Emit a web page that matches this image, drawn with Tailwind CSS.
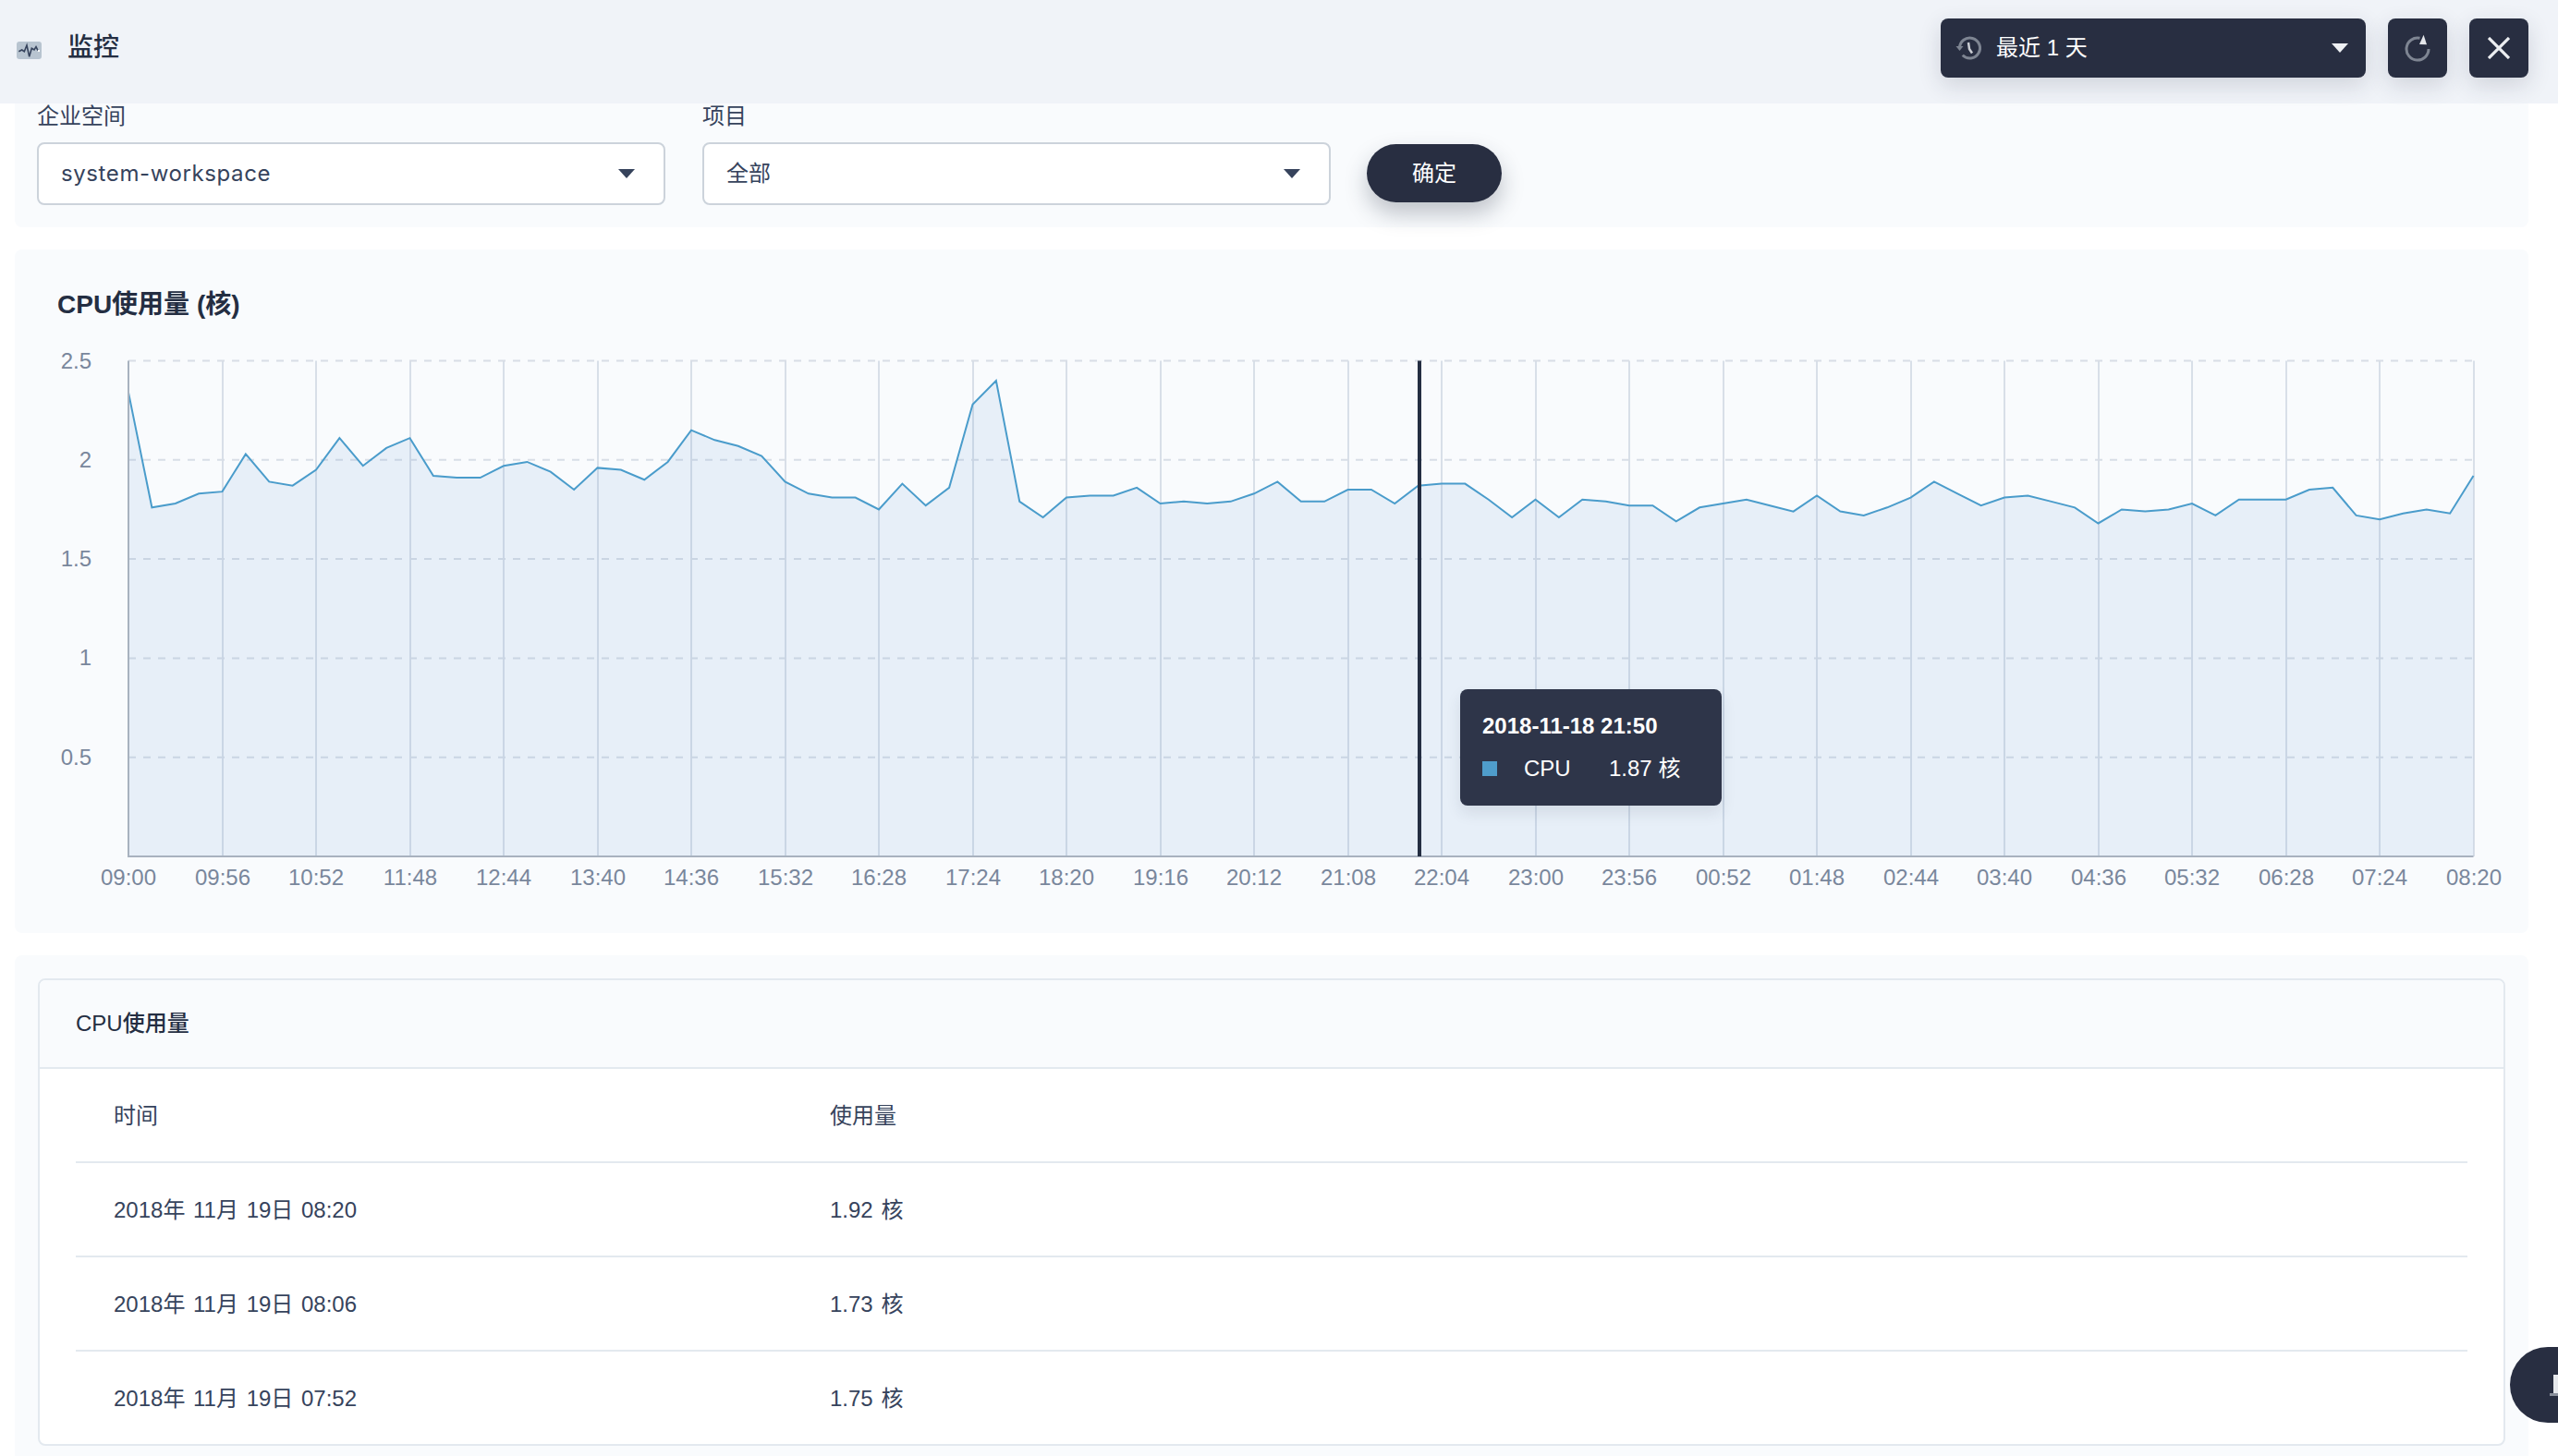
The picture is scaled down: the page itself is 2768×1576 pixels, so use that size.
<!DOCTYPE html>
<html lang="zh">

<head>
  <meta charset="UTF-8" />
  <script src="https://cdn.jsdelivr.net/npm/@tailwindcss/browser@4"></script>
  <title>监控</title>
</head>

<body class="m-0 p-0 bg-white text-[#242e42] text-[24px] [font-family:'Liberation_Sans','Noto_Sans_CJK_SC',sans-serif]">
  <div class="relative w-[2768px] h-[1576px] overflow-hidden">
    <!-- top bar -->
    <header class="relative z-10 flex items-center justify-between h-[112px] pl-[18px] pr-[32px] pb-[8px] bg-[#f0f3f8]">
      <div class="flex items-center">
        <svg width="27" height="19" viewBox="0 0 27 19" class="mr-[28px] mt-[4px]">
          <rect width="27" height="19" rx="3" fill="#b8c4d0" />
          <polyline points="2.3,10.7 5.7,9 8.3,10.7 11,4 13.7,16.3 16.3,7.3 19,9 21,5.7 23,9.7" fill="none" stroke="#36435c" stroke-width="1.6" />
          <rect x="23" y="9" width="2" height="2" fill="#fff" />
        </svg>
        <span class="text-[28px] font-medium leading-none">监控</span>
      </div>
      <div class="flex items-center gap-6">
        <div class="flex items-center w-[460px] h-[64px] pl-[16px] pr-[19px] rounded-lg bg-[#282e41] text-white shadow-[0_8px_24px_rgba(36,46,66,0.16)]">
          <svg width="28" height="26" viewBox="0 0 28 26" fill="none" stroke="#7e8592" stroke-width="3" class="mr-[16px]">
            <path d="M4.5 13a11 11 0 1 1 3.2 7.8" />
            <path d="M0.5 11h8l-4 5z" fill="#7e8592" stroke="none" />
            <path d="M14 7l1 7 3 4.5" stroke-width="2.5" stroke="#c9ccd2" />
          </svg>
          <span>最近 1 天</span>
          <svg width="18" height="10" viewBox="0 0 18 10" class="ml-auto"><path d="M0 0h18l-9 10z" fill="#eef0f3" /></svg>
        </div>
        <button class="flex items-center justify-center w-[64px] h-[64px] rounded-lg bg-[#282e41] shadow-[0_8px_24px_rgba(36,46,66,0.16)]">
          <svg width="28" height="30" viewBox="0 0 28 30" fill="none">
            <path d="M16.5 4.3A12 12 0 1 0 26 16" stroke="#7e8592" stroke-width="3" />
            <path d="M16 11L20.6 0.7 24 11.3z" fill="#e4e6ea" />
          </svg>
        </button>
        <button class="flex items-center justify-center w-[64px] h-[64px] rounded-lg bg-[#282e41] shadow-[0_8px_24px_rgba(36,46,66,0.16)]">
          <svg width="24" height="24" viewBox="0 0 24 24" fill="none" stroke="#eceef1" stroke-width="3.2">
            <path d="M1 1l22 22M23 1L1 23" />
          </svg>
        </button>
      </div>
    </header>

    <main class="flex flex-col gap-6 pl-4 pr-8">
      <!-- filters -->
      <section class="flex items-end gap-10 px-6 pb-6 rounded-b-lg bg-[#f9fbfd]">
        <div class="w-[680px]">
          <div class="h-[28px] mb-[14px] leading-[28px] text-[#36435c]">企业空间</div>
          <div class="flex items-center justify-between h-[68px] pl-[24px] pr-[31px] rounded-lg border-2 border-[#ccd3db] bg-white text-[#36435c]">
            <span class="[font-family:'Inter',sans-serif] tracking-[0.6px]">system-workspace</span>
            <svg width="18" height="10" viewBox="0 0 18 10"><path d="M0 0h18l-9 10z" fill="#36435c" /></svg>
          </div>
        </div>
        <div class="w-[680px]">
          <div class="h-[28px] mb-[14px] leading-[28px] text-[#36435c]">项目</div>
          <div class="flex items-center justify-between h-[68px] pl-[24px] pr-[31px] rounded-lg border-2 border-[#ccd3db] bg-white text-[#36435c]">
            <span>全部</span>
            <svg width="18" height="10" viewBox="0 0 18 10"><path d="M0 0h18l-9 10z" fill="#36435c" /></svg>
          </div>
        </div>
        <button class="w-[146px] h-[63px] mb-[3px] -ml-[1px] rounded-full bg-[#282e41] text-white shadow-[0_12px_24px_rgba(36,46,66,0.28)]">确定</button>
      </section>

      <!-- chart -->
      <section class="h-[740px] rounded-lg bg-[#f9fbfd]">
        <h2 class="pt-[42px] pl-[46px] h-[100px] text-[28px] leading-[36px] font-semibold">CPU使用量 (核)</h2>
        <div class="relative">
          <svg id="chart" width="2720" height="640" viewBox="0 0 2720 640" class="block"></svg>
          <div class="absolute left-[1564px] top-[376px] w-[283px] h-[126px] pt-[24px] pl-[24px] rounded-lg bg-[#2e3549] text-white shadow-[0_8px_16px_rgba(36,46,66,0.1)]">
            <div class="font-bold leading-[32px]">2018-11-18 21:50</div>
            <div class="flex items-center mt-[14px] leading-[32px]">
              <span class="w-4 h-4 bg-[#4f9dcb] mr-[29px]"></span>
              <span class="w-[92px]">CPU</span>
              <span>1.87 核</span>
            </div>
          </div>
        </div>
      </section>

      <!-- table -->
      <section class="h-[542px] pt-[25px] px-[25px] bg-[#f9fbfd] rounded-t-lg">
        <div class="h-[506px] rounded-lg border-2 border-[#e3e9ef] bg-white overflow-hidden">
          <div class="h-[96px] pl-[39px] leading-[94px] font-medium bg-[#f9fbfd] border-b-2 border-[#e3e9ef]">CPU使用量</div>
          <div class="mx-[39px] text-[#36435c] [word-spacing:2px]">
            <div class="flex items-center h-[102px] pl-[41px] pt-[2px] border-b-2 border-[#e3e9ef]">
              <span class="w-[775px]">时间</span><span>使用量</span>
            </div>
            <div class="flex items-center h-[102px] pl-[41px] pt-[2px] border-b-2 border-[#e3e9ef]">
              <span class="w-[775px]">2018年 11月 19日 08:20</span><span>1.92 核</span>
            </div>
            <div class="flex items-center h-[102px] pl-[41px] pt-[2px] border-b-2 border-[#e3e9ef]">
              <span class="w-[775px]">2018年 11月 19日 08:06</span><span>1.73 核</span>
            </div>
            <div class="flex items-center h-[102px] pl-[41px]">
              <span class="w-[775px]">2018年 11月 19日 07:52</span><span>1.75 核</span>
            </div>
          </div>
        </div>
      </section>
    </main>

    <!-- floating help button, cut off by the window edge -->
    <div class="absolute left-[2716px] top-[1458px] w-[120px] h-[82px] rounded-full bg-[#282e41]">
      <div class="absolute left-[47px] top-[30px] w-[20px] h-[20px] bg-[#e6e8ec]"></div>
      <div class="absolute left-[43px] top-[50px] w-[20px] h-[3px] bg-[#8a909c]"></div>
    </div>
  </div>

  <script>
    const cpu = [2.34, 1.76, 1.78, 1.83, 1.84, 2.03, 1.89, 1.87, 1.95, 2.11, 1.97, 2.06, 2.11, 1.92, 1.91, 1.91, 1.97, 1.99, 1.94, 1.85,
      1.96, 1.95, 1.90, 1.99, 2.15, 2.10, 2.07, 2.02, 1.89, 1.83, 1.81, 1.81, 1.75, 1.88, 1.77, 1.86, 2.28, 2.40, 1.79, 1.71,
      1.81, 1.82, 1.82, 1.86, 1.78, 1.79, 1.78, 1.79, 1.83, 1.89, 1.79, 1.79, 1.85, 1.85, 1.78, 1.87, 1.88, 1.88, 1.80, 1.71,
      1.80, 1.71, 1.80, 1.79, 1.77, 1.77, 1.69, 1.76, 1.78, 1.80, 1.77, 1.74, 1.82, 1.74, 1.72, 1.76, 1.81, 1.89, 1.83, 1.77,
      1.81, 1.82, 1.79, 1.76, 1.68, 1.75, 1.74, 1.75, 1.78, 1.72, 1.80, 1.80, 1.80, 1.85, 1.86, 1.72, 1.70, 1.73, 1.75, 1.73, 1.92];
    const times = ["09:00", "09:56", "10:52", "11:48", "12:44", "13:40", "14:36", "15:32", "16:28", "17:24", "18:20", "19:16", "20:12",
      "21:08", "22:04", "23:00", "23:56", "00:52", "01:48", "02:44", "03:40", "04:36", "05:32", "06:28", "07:24", "08:20"];

    const left = 123, step = 25.375, bottom = 557, unit = 214.6;
    const px = (i) => left + step * i;
    const py = (v) => bottom - v * unit;
    const right = px(100);
    let out = "";

    times.forEach((t, k) => {
      const x = Math.round(px(k * 4));
      if (k > 0) out += `<line x1="${x}" y1="${py(2.5)}" x2="${x}" y2="${bottom}" stroke="#d8dfe8" stroke-width="2" />`;
      out += `<text x="${x}" y="${bottom + 31}" text-anchor="middle" font-size="24" fill="#79879c">${t}</text>`;
    });
    [0.5, 1, 1.5, 2, 2.5].forEach((v) => {
      out += `<line x1="${left}" y1="${py(v)}" x2="${right}" y2="${py(v)}" stroke="#d8dee6" stroke-width="2" stroke-dasharray="8 8" />`;
      out += `<text x="83" y="${py(v) + 8}" text-anchor="end" font-size="24" fill="#79879c">${v}</text>`;
    });

    const line = cpu.map((v, i) => `${px(i)},${py(v)}`).join(" ");
    out += `<polygon points="${left},${bottom} ${line} ${right},${bottom}" fill="#4f8dcb" fill-opacity="0.1" />`;
    out += `<polyline points="${line}" fill="none" stroke="#4a9ccb" stroke-width="2" />`;
    out += `<line x1="${left}" y1="${py(2.5)}" x2="${left}" y2="${bottom + 1}" stroke="#a8b2bf" stroke-width="2" />`;
    out += `<line x1="${left - 1}" y1="${bottom}" x2="${right}" y2="${bottom}" stroke="#a8b2bf" stroke-width="2" />`;
    out += `<line x1="1520" y1="${py(2.5)}" x2="1520" y2="${bottom}" stroke="#242e42" stroke-width="4" />`;
    document.getElementById("chart").innerHTML = out;
  </script>
</body>

</html>
